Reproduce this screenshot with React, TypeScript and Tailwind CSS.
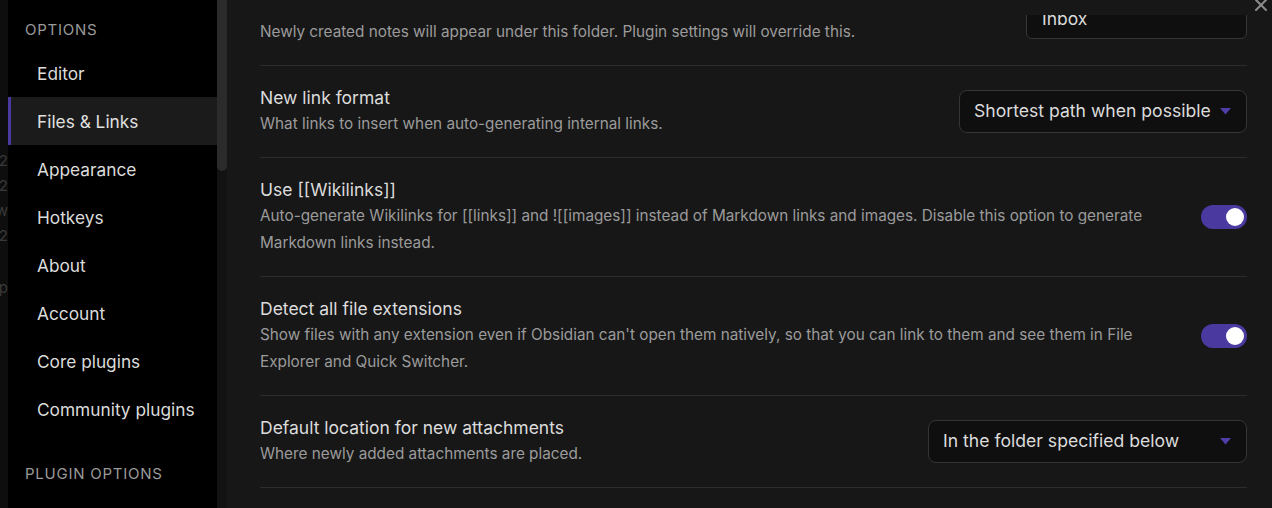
import { X } from 'lucide-react';

const navItems = [
  'Editor',
  'Files & Links',
  'Appearance',
  'Hotkeys',
  'About',
  'Account',
  'Core plugins',
  'Community plugins',
];

export default function App() {
  return (
    <div
      className="flex w-[1272px] h-[508px] overflow-hidden bg-[#171717] text-[#dadada]"
      style={{ fontFamily: 'Inter, "Noto Sans", sans-serif' }}
    >
      {/* app behind the modal */}
      <div className="w-[8px] shrink-0 bg-[#0e0e0e] overflow-hidden flex flex-col items-end pt-[148px] text-[15px] leading-[25px] text-[#3a3a3a]">
        <span>2</span>
        <span>2</span>
        <span>w</span>
        <span>2</span>
        <span className="mt-[27px]">p</span>
      </div>

      {/* Sidebar */}
      <aside className="w-[209px] shrink-0 bg-black flex flex-col">
        <SectionHeader label="Options" />
        {navItems.map((item) => (
          <NavItem key={item} label={item} active={item === 'Files & Links'} />
        ))}
        <div className="mt-[11px]">
          <SectionHeader label="Plugin options" />
        </div>
      </aside>

      {/* Scrollbar */}
      <div className="w-[10px] shrink-0 bg-[#121212] flex flex-col">
        <div className="h-[171px] w-full bg-[#2b2b2b] rounded-b-full" />
      </div>

      {/* Content */}
      <main className="relative flex-1 flex flex-col min-w-0">
        <div className="h-[15px] shrink-0 bg-[#171717] relative z-10">
          <X className="absolute right-[1px] -top-[5px] w-[20px] h-[20px] text-[#8a8a8a]" strokeWidth={2.5} />
        </div>
        <div className="flex-1 overflow-hidden pl-[33px] pr-[25px]">
          <div className="-mt-[41px]">
            <SettingRow
              title="Default location for new notes"
              description="Newly created notes will appear under this folder. Plugin settings will override this."
              control={
                <div className="w-[221px] h-[38px] rounded-md border border-[#363636] bg-[#0f0f0f] px-[15px] flex items-center text-[17.5px]">
                  Inbox
                </div>
              }
            />
            <SettingRow
              title="New link format"
              description="What links to insert when auto-generating internal links."
              control={<Dropdown value="Shortest path when possible" width="w-[288px]" />}
            />
            <SettingRow
              title="Use [[Wikilinks]]"
              description="Auto-generate Wikilinks for [[links]] and ![[images]] instead of Markdown links and images. Disable this option to generate Markdown links instead."
              control={<Toggle />}
            />
            <SettingRow
              title="Detect all file extensions"
              description="Show files with any extension even if Obsidian can't open them natively, so that you can link to them and see them in File Explorer and Quick Switcher."
              control={<Toggle />}
            />
            <SettingRow
              title="Default location for new attachments"
              description="Where newly added attachments are placed."
              control={<Dropdown value="In the folder specified below" width="w-[319px]" />}
            />
          </div>
        </div>
      </main>
    </div>
  );
}

function SectionHeader({ label }: { label: string }) {
  return (
    <div className="h-[49px] pl-[17px] pt-[19px] text-[15px] leading-[22px] uppercase tracking-[0.05em] text-[#9a9a9a]">
      {label}
    </div>
  );
}

function NavItem({ label, active }: { label: string; active?: boolean }) {
  return (
    <div
      className={
        active
          ? 'h-[48px] flex items-center pt-[2px] pl-[26px] border-l-[3px] border-[#4a3aa0] bg-[#1b1b1b] text-[17.3px] text-[#e0e0e0]'
          : 'h-[48px] flex items-center pt-[2px] pl-[29px] text-[17.3px] text-[#dcdcdc]'
      }
    >
      {label}
    </div>
  );
}

interface SettingRowProps {
  title: string;
  description: string;
  control: React.ReactNode;
}

function SettingRow({ title, description, control }: SettingRowProps) {
  return (
    <div className="flex items-center gap-10 py-5 border-b border-[#2c2c2c]">
      <div className="flex-1 min-w-0">
        <div className="text-[17.5px] leading-[24px] text-[#dcdcdc]">{title}</div>
        <div className="text-[15.3px] leading-[27px] text-[#9b9b9b]">{description}</div>
      </div>
      <div className="shrink-0">{control}</div>
    </div>
  );
}

function Dropdown({ value, width }: { value: string; width: string }) {
  return (
    <div
      className={`${width} h-[43px] rounded-lg border border-[#353535] bg-[#0f0f0f] pl-[14px] pr-[15px] flex items-center justify-between text-[17.6px] text-[#dcdcdc]`}
    >
      <span>{value}</span>
      <svg width="11" height="7" viewBox="0 0 11 7" className="shrink-0">
        <path d="M0 0 L11 0 L5.5 6.5 Z" fill="#4f3da8" />
      </svg>
    </div>
  );
}

function Toggle() {
  return (
    <div className="w-[46px] h-[24px] rounded-full bg-[#4a3aa0] flex items-center justify-end pr-[3px]">
      <div className="w-[18px] h-[18px] rounded-full bg-white" />
    </div>
  );
}
